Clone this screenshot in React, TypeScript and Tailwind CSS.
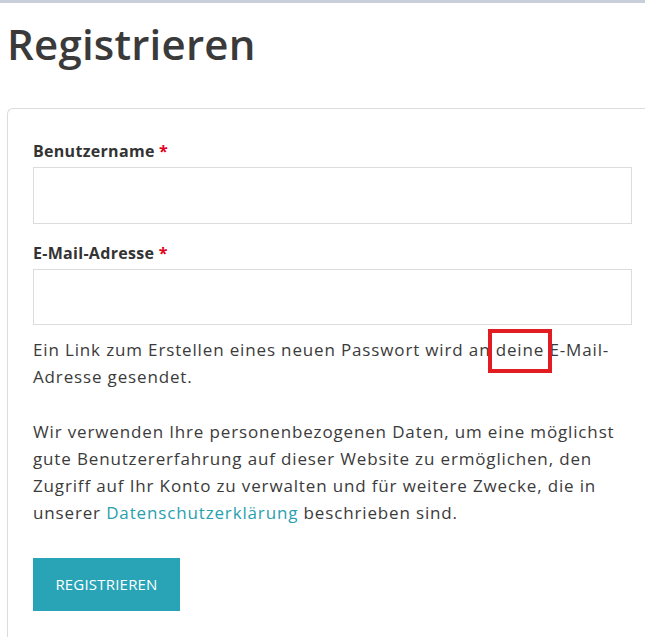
export default function App() {
  return (
    <div className="min-h-screen overflow-hidden bg-white font-['Open_Sans',sans-serif] text-[#3b3b3b]">
      <div className="h-[3px] bg-[#c8cfdb]" />
      <div className="px-[7px]">
        <h1 className="mt-[13px] text-[42px] font-semibold leading-[56px] tracking-[0.2px] text-[#3a3a3a]">
          Registrieren
        </h1>

        <div className="mt-[36px] w-[650px] rounded-tl-[6px] border-l border-t border-[#dcdcdc] px-[25px] pt-[31px] pb-10">
          <form className="flex flex-col" onSubmit={(e) => e.preventDefault()}>
            <label className="text-[16px] font-bold leading-[22px] tracking-[0.3px] text-[#333]">
              Benutzername <span className="text-[#e2001a]">*</span>
            </label>
            <input
              type="text"
              className="mt-[5px] h-[57px] w-full border border-[#dcdcdc] bg-white px-3 outline-none"
            />

            <label className="mt-[18px] text-[16px] font-bold leading-[22px] tracking-[0.3px] text-[#333]">
              E-Mail-Adresse <span className="text-[#e2001a]">*</span>
            </label>
            <input
              type="email"
              className="mt-[5px] h-[56px] w-full border border-[#dcdcdc] bg-white px-3 outline-none"
            />

            <p className="mt-[11px] text-[17px] leading-[27px] tracking-[0.85px]">
              Ein Link zum Erstellen eines neuen Passwort wird an{' '}
              <span className="relative">
                deine
                <span className="pointer-events-none absolute -left-[8px] -right-[8px] top-[calc(50%+1px)] h-[44px] -translate-y-1/2 border-[4px] border-[#e21c23]" />
              </span>{' '}
              E-Mail-Adresse gesendet.
            </p>

            <p className="mt-[28px] text-[17px] leading-[27px] tracking-[0.85px]">
              Wir verwenden Ihre personenbezogenen Daten, um eine möglichst gute
              Benutzererfahrung auf dieser Website zu ermöglichen, den Zugriff
              auf Ihr Konto zu verwalten und für weitere Zwecke, die in unserer{' '}
              <a href="#" className="text-[#2a9fb0]">
                Datenschutzerklärung
              </a>{' '}
              beschrieben sind.
            </p>

            <div className="mt-[32px]">
              <button
                type="submit"
                className="h-[53px] w-[147px] bg-[#29a3b6] text-[15px] font-medium tracking-[0.2px] text-white"
              >
                REGISTRIEREN
              </button>
            </div>
          </form>
        </div>
      </div>
    </div>
  );
}
